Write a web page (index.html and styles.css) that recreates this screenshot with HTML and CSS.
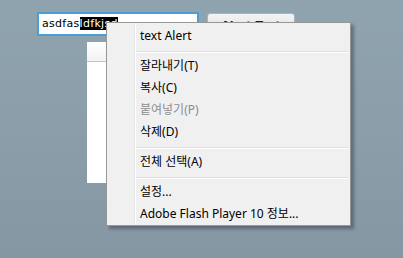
FILE: index.html
```html
<!DOCTYPE html>
<html lang="ko">
<head>
  <meta charset="UTF-8">
  <title>Context Menu</title>
  <link rel="stylesheet" href="styles.css">
</head>
<body>
  <div class="stage">
    <div class="toolbar">
      <div class="field"><span>asdfas</span><span class="sel">ldfkjsd</span></div>
      <button class="btn">Alert Test</button>
    </div>
    <div class="grid">
      <div class="grid-head"></div>
    </div>
  </div>

  <div class="menu">
    <div class="item">text Alert</div>
    <div class="sep"></div>
    <div class="item">잘라내기(T)</div>
    <div class="item">복사(C)</div>
    <div class="item disabled">붙여넣기(P)</div>
    <div class="item">삭제(D)</div>
    <div class="sep"></div>
    <div class="item">전체 선택(A)</div>
    <div class="sep"></div>
    <div class="item">설정...</div>
    <div class="item">Adobe Flash Player 10 정보...</div>
  </div>
</body>
</html>
```

FILE: styles.css
```css
body, html {
  margin: 0;
  height: 100%;
  overflow: hidden;
}

body {
  background: linear-gradient(to bottom, #90a4af, #8597a2);
  font-family: "Noto Sans", "Noto Sans CJK KR", sans-serif;
}

.stage {
  padding: 12px 0 0 37px;
}

.toolbar {
  display: flex;
  align-items: flex-start;
}

.field {
  box-sizing: border-box;
  width: 162px;
  height: 24px;
  border: 2px solid #4a9ed8;
  background: #fff;
  padding: 3px 0 0 3px;
  font-family: "DejaVu Sans", sans-serif;
  font-size: 11px;
  line-height: 13px;
  letter-spacing: 0.3px;
  color: #000;
  white-space: nowrap;
  overflow: hidden;
}

.sel {
  background: #000;
  color: #fff;
}

.btn {
  box-sizing: border-box;
  margin: 1px 0 0 8px;
  width: 88px;
  height: 24px;
  border: 1px solid #aab4ba;
  border-radius: 3px;
  background: linear-gradient(to bottom, #f2f4f5, #d9dee1);
  font-family: "DejaVu Sans", sans-serif;
  font-size: 11px;
  font-weight: bold;
  color: #1d2226;
  padding: 0;
}

.grid {
  box-sizing: border-box;
  margin: 5px 0 0 50px;
  width: 120px;
  height: 141px;
  background: #fff;
}

.grid-head {
  height: 19px;
  border-bottom: 1px solid #c2c6c9;
  background: linear-gradient(to bottom, #fff, #f1f2f3);
}

.menu {
  position: absolute;
  left: 106px;
  top: 22px;
  box-sizing: border-box;
  width: 245px;
  height: 204px;
  padding: 2px;
  border: 1px solid #979797;
  background:
    linear-gradient(to right, transparent 27px, #e2e3e3 27px, #e2e3e3 28px, #fff 28px, #fff 29px, transparent 29px),
    #f0f0f0;
  box-shadow: 3px 3px 3px rgba(40, 50, 60, 0.45);
  font-size: 12px;
  color: #000;
}

.item {
  height: 22px;
  line-height: 22px;
  padding-left: 31px;
  white-space: nowrap;
}

.disabled {
  color: #8d8d8d;
}

.sep {
  height: 8px;
  margin-left: 27px;
  background: linear-gradient(to bottom, transparent 4px, #e0e0e0 4px, #e0e0e0 5px, #fff 5px, #fff 6px, transparent 6px);
}
```
